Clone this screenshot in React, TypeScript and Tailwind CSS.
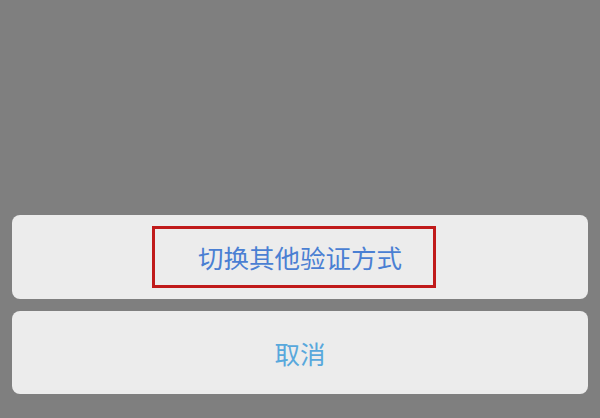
export default function App() {
  return (
    <div
      className="flex h-[418px] w-full flex-col justify-end gap-3 bg-[#7f7f7f] px-3 pb-6"
      style={{ fontFamily: '"Noto Sans CJK SC", "Noto Sans", sans-serif' }}
    >
      {/* Switch verification method */}
      <div className="flex h-[84px] items-center rounded-lg bg-[#ececec] pl-[140px]">
        <div className="flex h-[62px] w-[284px] items-center border-[3px] border-[#c01a1a] pl-[43px]">
          <span className="text-[25.5px] leading-none text-[#4a7fd3]">切换其他验证方式</span>
        </div>
      </div>

      {/* Cancel */}
      <div className="flex h-[83px] items-center justify-center rounded-lg bg-[#ececec]">
        <span className="text-[25.5px] leading-none text-[#58a8dc]">取消</span>
      </div>
    </div>
  );
}
